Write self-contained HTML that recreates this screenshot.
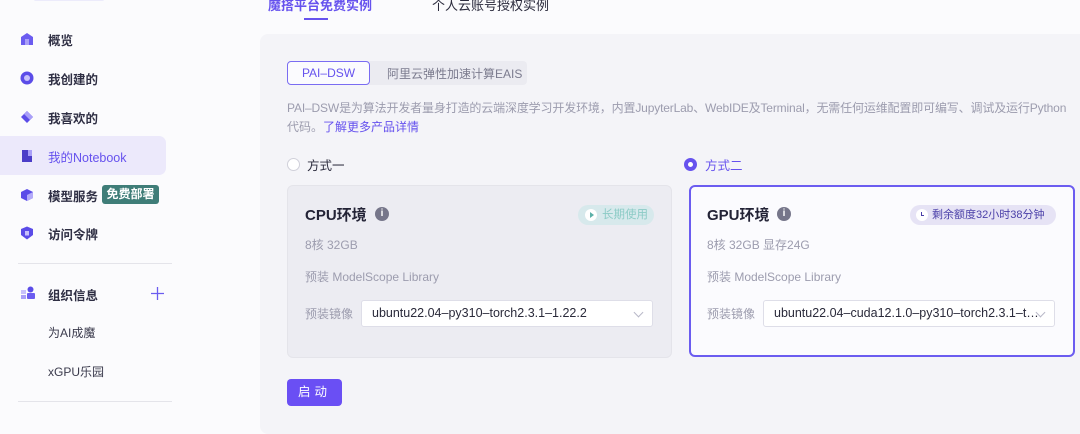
<!DOCTYPE html>
<html><head><meta charset="utf-8"><style>
*{box-sizing:border-box;margin:0;padding:0}
body{width:1080px;height:423px;overflow:hidden;background:#fbfbfd;font-family:"Liberation Sans","Noto Sans CJK SC",sans-serif;color:#2b2b3d;position:relative}
.a{position:absolute;white-space:nowrap}
.nav{font-size:12.5px;font-weight:bold;color:#2f2f44}
.ic{position:absolute;width:14px;height:14px}
.muted{color:#9c9cae;font-size:12px}
.sel{position:absolute;height:27px;background:#fff;border:1px solid #dedee8;border-radius:3px;font-size:12.5px;color:#2a2a3a;padding:5px 10px;white-space:nowrap;overflow:hidden}
.chev{position:absolute;right:10px;top:8px;width:7px;height:7px;border-right:1px solid #b8b8c8;border-bottom:1px solid #b8b8c8;transform:rotate(45deg)}
</style></head><body>
<div class="a" style="left:34px;top:-2px;width:70px;height:3px;background:#ecebfb;border-radius:2px"></div>
<!-- sidebar -->
<div class="a" style="left:0;top:136px;width:166px;height:39px;background:#ece9fb;border-radius:0 7px 7px 0"></div>
<svg class="ic" style="left:20px;top:32px" viewBox="0 0 14 14"><path d="M1 5 L7 1 L13 5 V13 H1Z" fill="#6b5cf0"/><rect x="5" y="7" width="4" height="6" fill="#a99ff8"/></svg>
<div class="a nav" style="left:48px;top:30px">概览</div>
<svg class="ic" style="left:20px;top:71px" viewBox="0 0 14 14"><circle cx="7" cy="7" r="6.5" fill="#5b4ce8"/><circle cx="7" cy="7" r="3" fill="#c7c0fb"/></svg>
<div class="a nav" style="left:48px;top:69px">我创建的</div>
<svg class="ic" style="left:20px;top:110px" viewBox="0 0 14 14"><path d="M7 1 L13 7 L7 13 L1 7Z" fill="#5b4ce8"/><path d="M7 1 L13 7 L10 10 L4 4Z" fill="#a99ff8"/></svg>
<div class="a nav" style="left:48px;top:108px">我喜欢的</div>
<svg class="ic" style="left:20px;top:149px" viewBox="0 0 14 14"><rect x="2" y="1" width="10" height="12" fill="#4b3dc8"/><rect x="8" y="1" width="4" height="6" fill="#a99ff8"/></svg>
<div class="a nav" style="left:48px;top:147px;color:#6652ee;font-weight:normal">我的Notebook</div>
<svg class="ic" style="left:20px;top:188px" viewBox="0 0 14 14"><path d="M7 1 L13 4 V10 L7 13 L1 10 V4Z" fill="#5b4ce8"/><path d="M7 7 L13 4 V10 L7 13Z" fill="#b3aaf9"/></svg>
<div class="a nav" style="left:48px;top:186px">模型服务</div>
<div class="a" style="left:102px;top:185px;width:57px;height:19px;background:#3f7d78;border-radius:3px;color:#fff;font-size:12px;font-weight:bold;text-align:center;line-height:19px">免费部署</div>
<svg class="ic" style="left:20px;top:226px" viewBox="0 0 14 14"><path d="M7 0.5 L13 3 V9 L7 13.5 L1 9 V3Z" fill="#5b4ce8"/><rect x="5" y="5" width="4" height="4.5" fill="#c7c0fb"/></svg>
<div class="a nav" style="left:48px;top:224px">访问令牌</div>
<div class="a" style="left:18px;top:263px;width:154px;height:1px;background:#e4e4ea"></div>
<svg class="ic" style="left:21px;top:286px" viewBox="0 0 14 14"><rect x="0" y="4" width="5" height="4" fill="#c7c0fb"/><rect x="0" y="9" width="5" height="4" fill="#a99ff8"/><circle cx="9.5" cy="3.5" r="3" fill="#5b4ce8"/><rect x="6" y="7" width="8" height="6" rx="1" fill="#6b5cf0"/></svg>
<div class="a nav" style="left:48px;top:285px">组织信息</div>
<svg class="a" style="left:151px;top:287px" width="13" height="13" viewBox="0 0 13 13"><path d="M6.5 0V13M0 6.5H13" stroke="#6b5cf0" stroke-width="1.3"/></svg>
<div class="a" style="left:48px;top:324px;font-size:12px;color:#3a3a4c">为AI成魔</div>
<div class="a" style="left:48px;top:363px;font-size:12px;color:#3a3a4c">xGPU乐园</div>
<div class="a" style="left:18px;top:401px;width:154px;height:1px;background:#e4e4ea"></div>
<!-- tabs -->
<div class="a" style="left:268px;top:-5px;font-size:13px;color:#6652ee;font-weight:bold">魔搭平台免费实例</div>
<div class="a" style="left:304px;top:18px;width:24px;height:2px;background:#6652ee"></div>
<div class="a" style="left:432px;top:-5px;font-size:13px;color:#2b2b3d">个人云账号授权实例</div>
<!-- panel -->
<div class="a" style="left:260px;top:34px;width:830px;height:400px;background:#f4f4f8;border-radius:8px"></div>
<div class="a" style="left:287px;top:61px;width:240px;height:24px;background:#ebebf1;border-radius:4px"></div>
<div class="a" style="left:287px;top:61px;width:83px;height:24px;background:#fbfbfe;border:1px solid #7a6cf2;border-radius:4px;color:#6652ee;font-size:12px;text-align:center;line-height:22px">PAI–DSW</div>
<div class="a" style="left:387px;top:65px;font-size:12px;color:#7b7b8e">阿里云弹性加速计算EAIS</div>
<div class="a muted" style="left:287px;top:99px;font-size:12px;letter-spacing:-0.15px">PAI–DSW是为算法开发者量身打造的云端深度学习开发环境，内置JupyterLab、WebIDE及Terminal，无需任何运维配置即可编写、调试及运行Python</div>
<div class="a muted" style="left:287px;top:118px">代码。<span style="color:#6652ee">了解更多产品详情</span></div>
<div class="a" style="left:287px;top:158px;width:13px;height:13px;border:1px solid #d0d0da;border-radius:50%;background:#fff"></div>
<div class="a" style="left:307px;top:155px;font-size:12.5px;color:#2b2b3d">方式一</div>
<div class="a" style="left:684px;top:158px;width:13px;height:13px;border:4px solid #6652ee;border-radius:50%;background:#fff"></div>
<div class="a" style="left:705px;top:155px;font-size:12.5px;color:#6652ee">方式二</div>
<!-- CPU card -->
<div class="a" style="left:287px;top:185px;width:385px;height:173px;background:#ececf2;border:1px solid #e4e4ea;border-radius:6px"></div>
<div class="a" style="left:305px;top:204px;font-size:15px;font-weight:bold;color:#232336">CPU环境</div>
<div class="a" style="left:375px;top:207px;width:14px;height:14px;border-radius:50%;background:#76768a;color:#fff;font-size:10px;font-weight:bold;text-align:center;line-height:14px">i</div>
<div class="a" style="left:578px;top:205px;width:76px;height:20px;background:#d7e9ec;border-radius:10px;color:#8ccbc6;font-size:11.5px;line-height:20px;padding-left:24px">长期使用</div>
<div class="a" style="left:585px;top:209px;width:12px;height:12px;border-radius:50%;background:#fff"></div>
<div class="a" style="left:590px;top:212px;width:0;height:0;border-left:4px solid #5bb0a8;border-top:3px solid transparent;border-bottom:3px solid transparent"></div>
<div class="a muted" style="left:305px;top:236px">8核 32GB</div>
<div class="a muted" style="left:305px;top:268px">预装 ModelScope Library</div>
<div class="a muted" style="left:305px;top:305px">预装镜像</div>
<div class="sel" style="left:361px;top:300px;width:292px">ubuntu22.04–py310–torch2.3.1–1.22.2<span class="chev"></span></div>
<!-- GPU card -->
<div class="a" style="left:689px;top:185px;width:386px;height:172px;background:#fbfbfe;border:2px solid #6b5cf0;border-radius:6px"></div>
<div class="a" style="left:707px;top:204px;font-size:15px;font-weight:bold;color:#232336">GPU环境</div>
<div class="a" style="left:777px;top:207px;width:14px;height:14px;border-radius:50%;background:#76768a;color:#fff;font-size:10px;font-weight:bold;text-align:center;line-height:14px">i</div>
<div class="a" style="left:910px;top:205px;width:146px;height:20px;background:#e6e3f5;border-radius:10px;color:#4a3fa8;font-size:11px;line-height:20px;padding-left:22px">剩余额度32小时38分钟</div>
<div class="a" style="left:916px;top:209px;width:12px;height:12px;border-radius:50%;background:#fff"></div>
<div class="a" style="left:921px;top:212px;width:3px;height:4px;border-left:1px solid #4a3fa8;border-bottom:1px solid #4a3fa8"></div>
<div class="a muted" style="left:707px;top:236px">8核 32GB 显存24G</div>
<div class="a muted" style="left:707px;top:268px">预装 ModelScope Library</div>
<div class="a muted" style="left:707px;top:305px">预装镜像</div>
<div class="sel" style="left:763px;top:300px;width:292px">ubuntu22.04–cuda12.1.0–py310–torch2.3.1–t…<span class="chev"></span></div>
<div class="a" style="left:287px;top:379px;width:55px;height:27px;background:#6a4ff4;border-radius:4px;color:#fff;font-size:12.5px;text-align:center;line-height:27px;letter-spacing:4px">启动</div>
</body></html>
